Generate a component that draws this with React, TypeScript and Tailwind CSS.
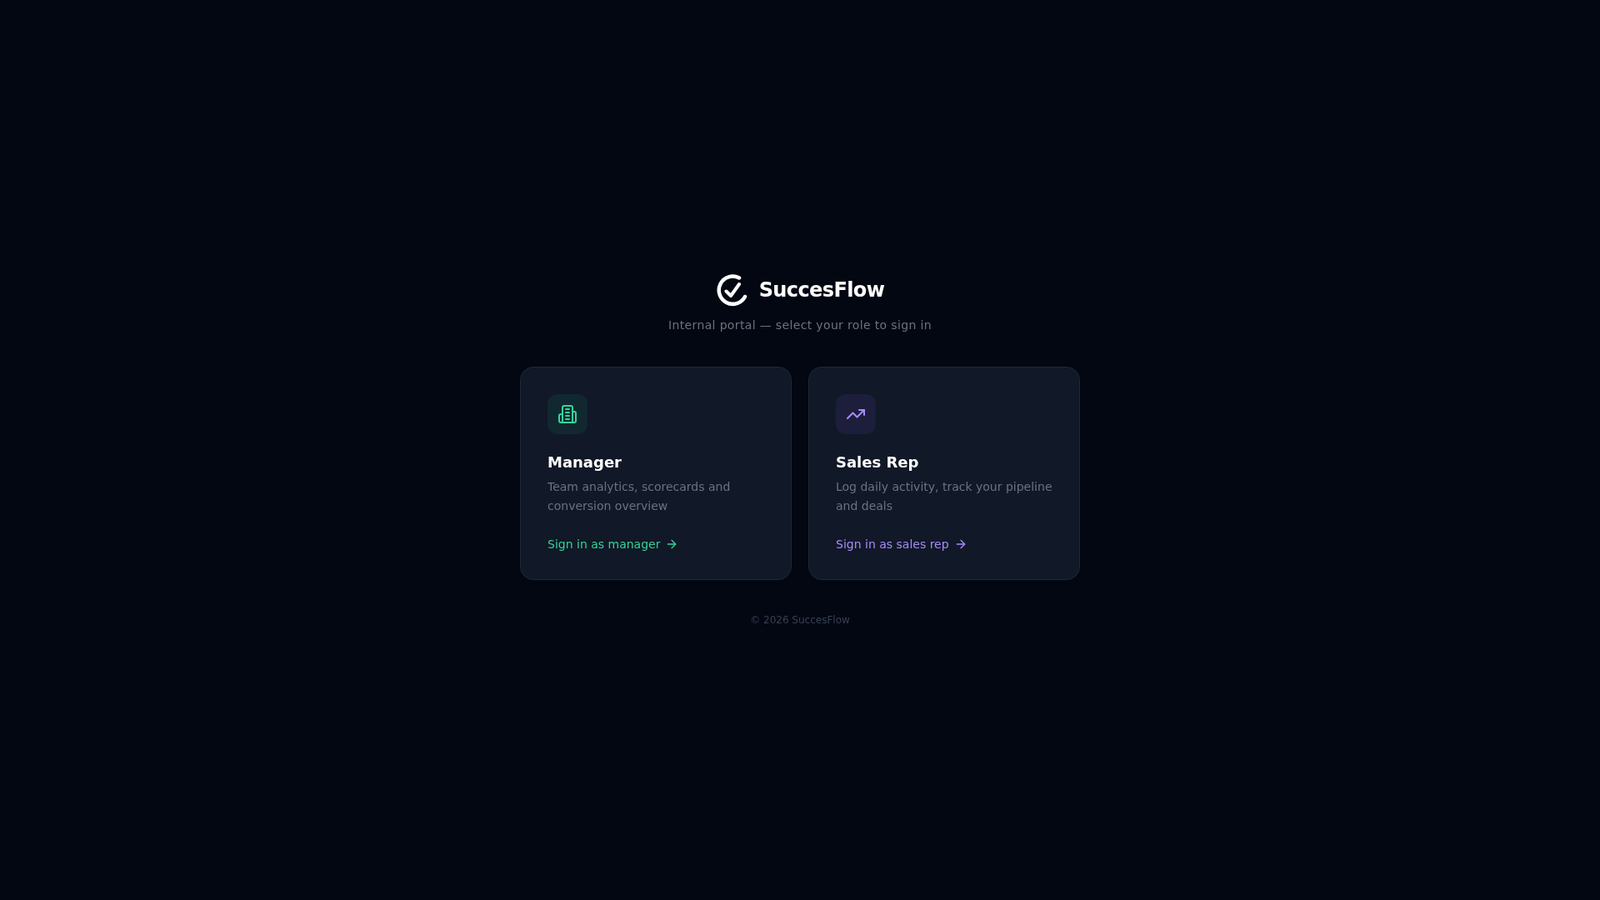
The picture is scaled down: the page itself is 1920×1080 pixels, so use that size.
import { ArrowRight, TrendingUp } from "lucide-react";

const Logo = () => (
  <svg width="40" height="40" viewBox="0 0 40 40" fill="none" stroke="white" strokeLinecap="round" strokeLinejoin="round">
    <path d="M28 5.5A16.6 16.6 0 1 0 35 28" strokeWidth="4.5" />
    <path d="M12.5 21.5L18 27L28 13" strokeWidth="4" />
  </svg>
);

const BuildingIcon = () => (
  <svg width="24" height="24" viewBox="0 0 24 24" fill="none" stroke="currentColor" strokeWidth="2" strokeLinecap="round" strokeLinejoin="round">
    <path d="M6 22V4a2 2 0 0 1 2-2h8a2 2 0 0 1 2 2v18Z" />
    <path d="M6 12H4a2 2 0 0 0-2 2v6a2 2 0 0 0 2 2h2" />
    <path d="M18 9h2a2 2 0 0 1 2 2v9a2 2 0 0 1-2 2h-2" />
    <path d="M10 6h4" />
    <path d="M10 10h4" />
    <path d="M10 14h4" />
    <path d="M10 18h4" />
  </svg>
);

const RoleCard = ({ icon, iconBox, title, text, link, linkColor }: any) => (
  <div className="rounded-2xl border border-[#1f2937] bg-[#111827] p-8">
    <div className={"mb-5 flex h-12 w-12 items-center justify-center rounded-xl " + iconBox}>{icon}</div>
    <h2 className="mb-1 text-lg leading-7 font-semibold text-white">{title}</h2>
    <p className="text-sm leading-[23px] text-[#6b7280]">{text}</p>
    <div className={"mt-6 flex items-center gap-1.5 text-sm leading-5 " + linkColor}>
      {link}
      <ArrowRight size={16} />
    </div>
  </div>
);

export default function App() {
  return (
    <div className="flex min-h-screen flex-col items-center justify-center bg-[#030712] font-['DejaVu_Sans',sans-serif]">
      <div className="flex flex-col items-center will-change-transform">
        <div className="mb-10 flex flex-col items-center">
          <div className="mb-3 flex items-center gap-3">
            <Logo />
            <span className="text-2xl font-bold tracking-tight text-white">SuccesFlow</span>
          </div>
          <p className="text-sm leading-5 tracking-wide text-[#6b7280]">Internal portal — select your role to sign in</p>
        </div>
        <div className="grid w-[672px] grid-cols-2 gap-5">
          <RoleCard
            icon={<BuildingIcon />}
            iconBox="bg-[#10b981]/10 text-[#34d399]"
            title="Manager"
            text="Team analytics, scorecards and conversion overview"
            link="Sign in as manager"
            linkColor="text-[#34d399]"
          />
          <RoleCard
            icon={<TrendingUp size={24} />}
            iconBox="bg-[#8b5cf6]/10 text-[#a78bfa]"
            title="Sales Rep"
            text="Log daily activity, track your pipeline and deals"
            link="Sign in as sales rep"
            linkColor="text-[#a78bfa]"
          />
        </div>
        <p className="mt-10 text-xs leading-4 text-[#374151]">© 2026 SuccesFlow</p>
      </div>
    </div>
  );
}
